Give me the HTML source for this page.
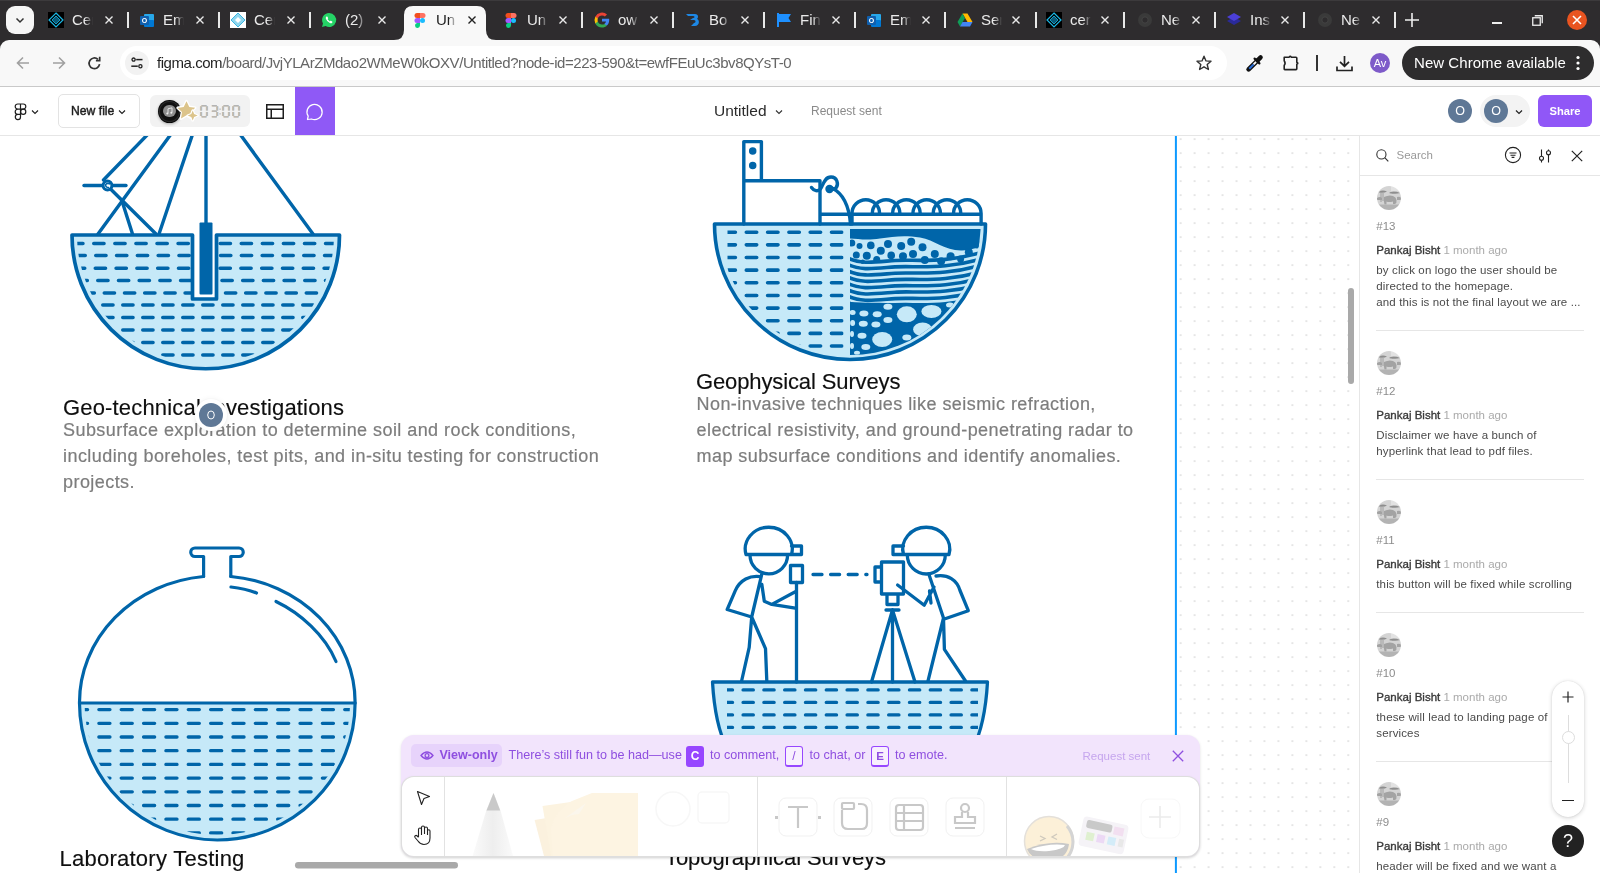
<!DOCTYPE html>
<html><head><meta charset="utf-8">
<style>
*{box-sizing:border-box;margin:0;padding:0}
html,body{width:1600px;height:873px;overflow:hidden;background:#fff;font-family:"Liberation Sans",sans-serif}
.a{position:absolute}
svg{position:absolute;overflow:visible}
#tabs{position:absolute;left:0;top:0;width:1600px;height:50px;background:#2e2c2e}
.tab{position:absolute;top:0;height:40px;width:90px}
.fav{position:absolute;left:0;top:12px;width:16px;height:16px}
.tt{position:absolute;left:24px;top:12px;font-size:15px;line-height:16px;color:#eaeaea;white-space:nowrap;width:21px;overflow:hidden;-webkit-mask-image:linear-gradient(90deg,#000 60%,transparent 100%)}
.tx{position:absolute;left:57px;top:16px;width:8px;height:8px}
.sep{position:absolute;top:12px;width:2px;height:16px;background:#e8e8e8}
#toolbar{position:absolute;left:0;top:40px;width:1600px;height:47px;background:#f8f8f8;border-bottom:1px solid #c9c9c9;border-radius:9px 9px 0 0}
#figbar{position:absolute;left:0;top:87px;width:1600px;height:49px;background:#fff;border-bottom:1px solid #e6e6e6}
#canvas{position:absolute;left:0;top:136px;width:1359px;height:737px;background:#fff;overflow:hidden}
#panel{position:absolute;left:1359px;top:136px;width:241px;height:737px;background:#fff;border-left:1px solid #e6e6e6;overflow:hidden}
.h{position:absolute;font-size:22px;line-height:26px;letter-spacing:0.17px;color:#0f0f0f;white-space:nowrap;-webkit-text-stroke:0.15px #0f0f0f}
.p{position:absolute;font-size:18px;color:#7d7d7d;line-height:26px;letter-spacing:0.44px;white-space:nowrap;-webkit-text-stroke:0.2px #7d7d7d}
</style></head><body>
<div style="position:absolute;left:0;top:0;width:1600px;height:873px;will-change:transform;overflow:hidden"><div id="tabs">
<div class="a" style="left:0;top:0;width:1600px;height:1px;background:#3c3a3c"></div>
<div class="a" style="left:6px;top:6px;width:28px;height:28px;border-radius:9px;background:#f6f6f6"></div>
<svg style="left:15px;top:15px" width="10" height="10" viewBox="0 0 10 10"><path d="M1.5 3.5L5 7L8.5 3.5" fill="none" stroke="#333" stroke-width="1.5"/></svg>
<svg style="left:394.0px;top:6px" width="104" height="34" viewBox="0 0 104 34"><path d="M0 34 Q10 34 10 24 V9 Q10 0 19 0 H83 Q92 0 92 9 V24 Q92 34 102 34 Z" fill="#f8f8f8"/></svg>
<div class="tab" style="left:48.0px"><svg class="fav" viewBox="0 0 16 16" width="16" height="16"><rect width="16" height="16" fill="#000"/><path d="M8 1L15 8L8 15L1 8Z" fill="none" stroke="#1ab8e6" stroke-width="1.2"/><path d="M8 4L12 8L8 12L4 8Z" fill="#0a5a78" stroke="#1ab8e6" stroke-width=".8"/></svg><div class="tt" style="color:#eaeaea">Cer</div><svg class="tx" style="left:57.0px" viewBox="0 0 8 8"><path d="M.5 .5L7.5 7.5M7.5 .5L.5 7.5" stroke="#eaeaea" stroke-width="1.4"/></svg></div>
<div class="sep" style="left:127.0px"></div>
<div class="tab" style="left:139.0px"><svg class="fav" viewBox="0 0 16 16" width="16" height="16"><rect x="5" y="2" width="10" height="12" rx="1" fill="#28a8ea"/><rect x="5" y="8" width="10" height="7" rx="1" fill="#0078d4"/><rect x="1" y="4" width="9" height="9" rx="1" fill="#0f5fae"/><text x="5.5" y="11.3" font-size="7" font-weight="bold" fill="#fff" text-anchor="middle" font-family="Liberation Sans">O</text></svg><div class="tt" style="color:#eaeaea">Em</div><svg class="tx" style="left:56.8px" viewBox="0 0 8 8"><path d="M.5 .5L7.5 7.5M7.5 .5L.5 7.5" stroke="#eaeaea" stroke-width="1.4"/></svg></div>
<div class="sep" style="left:217.9px"></div>
<div class="tab" style="left:230.0px"><svg class="fav" viewBox="0 0 16 16" width="16" height="16"><rect width="16" height="16" fill="#fff"/><path d="M8 1L15 8L8 15L1 8Z" fill="#8fd6ee" stroke="#3bb5e0" stroke-width="1"/><path d="M8 5L11 8L8 11L5 8Z" fill="#fff"/></svg><div class="tt" style="color:#eaeaea">Cer</div><svg class="tx" style="left:56.7px" viewBox="0 0 8 8"><path d="M.5 .5L7.5 7.5M7.5 .5L.5 7.5" stroke="#eaeaea" stroke-width="1.4"/></svg></div>
<div class="sep" style="left:308.7px"></div>
<div class="tab" style="left:321.0px"><svg class="fav" viewBox="0 0 16 16" width="16" height="16"><path d="M8 1a7 7 0 0 0-6 10.5L1 15l3.6-1A7 7 0 1 0 8 1z" fill="#25d366"/><path d="M5.5 4.6c.3-.2.7-.2.9.1l.7 1.3c.1.3 0 .5-.2.7l-.4.4c.5 1 1.3 1.8 2.3 2.3l.4-.4c.2-.2.5-.3.7-.2l1.3.7c.3.2.3.6.1.9-.6.9-1.5 1-2.4.6A7 7 0 0 1 5 7c-.4-.9-.2-1.8.5-2.4z" fill="#fff"/></svg><div class="tt" style="color:#eaeaea">(2)</div><svg class="tx" style="left:56.5px" viewBox="0 0 8 8"><path d="M.5 .5L7.5 7.5M7.5 .5L.5 7.5" stroke="#eaeaea" stroke-width="1.4"/></svg></div>
<div class="tab" style="left:412.0px"><svg class="fav" viewBox="0 0 16 16" width="16" height="16"><path d="M5 1h3v5H5a2.5 2.5 0 0 1 0-5z" fill="#f24e1e"/><path d="M8 1h3a2.5 2.5 0 0 1 0 5H8z" fill="#ff7262"/><path d="M5 6h3v5H5a2.5 2.5 0 0 1 0-5z" fill="#a259ff"/><circle cx="10.5" cy="8.5" r="2.5" fill="#1abcfe"/><path d="M5 11h3v2.5A2.5 2.5 0 1 1 5 11z" fill="#0acf83"/></svg><div class="tt" style="color:#222">Un</div><svg class="tx" style="left:56.3px" viewBox="0 0 8 8"><path d="M.5 .5L7.5 7.5M7.5 .5L.5 7.5" stroke="#222" stroke-width="1.4"/></svg></div>
<div class="tab" style="left:503.0px"><svg class="fav" viewBox="0 0 16 16" width="16" height="16"><path d="M5 1h3v5H5a2.5 2.5 0 0 1 0-5z" fill="#f24e1e"/><path d="M8 1h3a2.5 2.5 0 0 1 0 5H8z" fill="#ff7262"/><path d="M5 6h3v5H5a2.5 2.5 0 0 1 0-5z" fill="#a259ff"/><circle cx="10.5" cy="8.5" r="2.5" fill="#1abcfe"/><path d="M5 11h3v2.5A2.5 2.5 0 1 1 5 11z" fill="#0acf83"/></svg><div class="tt" style="color:#eaeaea">Un</div><svg class="tx" style="left:56.2px" viewBox="0 0 8 8"><path d="M.5 .5L7.5 7.5M7.5 .5L.5 7.5" stroke="#eaeaea" stroke-width="1.4"/></svg></div>
<div class="sep" style="left:581.3px"></div>
<div class="tab" style="left:594.0px"><svg class="fav" viewBox="0 0 16 16" width="16" height="16"><path d="M15.2 8.2c0-.5 0-1-.1-1.4H8v2.7h4a3.5 3.5 0 0 1-1.5 2.2v1.8h2.4c1.4-1.3 2.3-3.2 2.3-5.3z" fill="#4285f4"/><path d="M8 15.5c2 0 3.7-.7 4.9-1.8l-2.4-1.8c-.7.4-1.5.7-2.5.7-1.9 0-3.6-1.3-4.2-3.1H1.3v1.9A7.5 7.5 0 0 0 8 15.5z" fill="#34a853"/><path d="M3.8 9.5a4.5 4.5 0 0 1 0-2.9V4.7H1.3a7.5 7.5 0 0 0 0 6.7z" fill="#fbbc05"/><path d="M8 3.5c1.1 0 2.1.4 2.9 1.1l2.1-2.1A7.5 7.5 0 0 0 1.3 4.7l2.5 1.9C4.4 4.8 6.1 3.5 8 3.5z" fill="#ea4335"/></svg><div class="tt" style="color:#eaeaea">ow</div><svg class="tx" style="left:56.0px" viewBox="0 0 8 8"><path d="M.5 .5L7.5 7.5M7.5 .5L.5 7.5" stroke="#eaeaea" stroke-width="1.4"/></svg></div>
<div class="sep" style="left:672.1px"></div>
<div class="tab" style="left:685.0px"><svg class="fav" viewBox="0 0 16 16" width="16" height="16"><path d="M1 2h9c3 0 4 3 2 5 3 1 2.5 7-2 7H6l3-3c2 0 2-3 0-3H5l3-2c2 0 2-2 0-2H3z" fill="#1e88e5"/></svg><div class="tt" style="color:#eaeaea">Bo</div><svg class="tx" style="left:55.9px" viewBox="0 0 8 8"><path d="M.5 .5L7.5 7.5M7.5 .5L.5 7.5" stroke="#eaeaea" stroke-width="1.4"/></svg></div>
<div class="sep" style="left:763.0px"></div>
<div class="tab" style="left:776.0px"><svg class="fav" viewBox="0 0 16 16" width="16" height="16"><rect x="1" y="1" width="2" height="14" fill="#1e90ff"/><path d="M3 2h12l-2.5 4L15 10H3z" fill="#1e90ff"/></svg><div class="tt" style="color:#eaeaea">Fin</div><svg class="tx" style="left:55.7px" viewBox="0 0 8 8"><path d="M.5 .5L7.5 7.5M7.5 .5L.5 7.5" stroke="#eaeaea" stroke-width="1.4"/></svg></div>
<div class="sep" style="left:853.9px"></div>
<div class="tab" style="left:866.0px"><svg class="fav" viewBox="0 0 16 16" width="16" height="16"><rect x="5" y="2" width="10" height="12" rx="1" fill="#28a8ea"/><rect x="5" y="8" width="10" height="7" rx="1" fill="#0078d4"/><rect x="1" y="4" width="9" height="9" rx="1" fill="#0f5fae"/><text x="5.5" y="11.3" font-size="7" font-weight="bold" fill="#fff" text-anchor="middle" font-family="Liberation Sans">O</text></svg><div class="tt" style="color:#eaeaea">Em</div><svg class="tx" style="left:55.5px" viewBox="0 0 8 8"><path d="M.5 .5L7.5 7.5M7.5 .5L.5 7.5" stroke="#eaeaea" stroke-width="1.4"/></svg></div>
<div class="sep" style="left:943.7px"></div>
<div class="tab" style="left:957.0px"><svg class="fav" viewBox="0 0 16 16" width="16" height="16"><path d="M5.5 1.5h5l5 8.5h-5z" fill="#ffba00"/><path d="M5.5 1.5L0.5 10l2.5 4.5 5-8.5z" fill="#0f9d58"/><path d="M3 14.5h10l2.5-4.5h-10z" fill="#4285f4"/></svg><div class="tt" style="color:#eaeaea">Ser</div><svg class="tx" style="left:55.4px" viewBox="0 0 8 8"><path d="M.5 .5L7.5 7.5M7.5 .5L.5 7.5" stroke="#eaeaea" stroke-width="1.4"/></svg></div>
<div class="sep" style="left:1034.6px"></div>
<div class="tab" style="left:1046.0px"><svg class="fav" viewBox="0 0 16 16" width="16" height="16"><rect width="16" height="16" fill="#000"/><path d="M8 1L15 8L8 15L1 8Z" fill="none" stroke="#1ab8e6" stroke-width="1.2"/><path d="M8 4L12 8L8 12L4 8Z" fill="#0a5a78" stroke="#1ab8e6" stroke-width=".8"/></svg><div class="tt" style="color:#eaeaea">cer</div><svg class="tx" style="left:55.2px" viewBox="0 0 8 8"><path d="M.5 .5L7.5 7.5M7.5 .5L.5 7.5" stroke="#eaeaea" stroke-width="1.4"/></svg></div>
<div class="sep" style="left:1123.4px"></div>
<div class="tab" style="left:1137.0px"><svg class="fav" viewBox="0 0 16 16" width="16" height="16"><circle cx="8" cy="8" r="7" fill="#3a3a3a"/><circle cx="8" cy="8" r="3.2" fill="#2e2c2e" stroke="#444" stroke-width="1"/></svg><div class="tt" style="color:#eaeaea">Ne</div><svg class="tx" style="left:55.0px" viewBox="0 0 8 8"><path d="M.5 .5L7.5 7.5M7.5 .5L.5 7.5" stroke="#eaeaea" stroke-width="1.4"/></svg></div>
<div class="sep" style="left:1214.3px"></div>
<div class="tab" style="left:1226.0px"><svg class="fav" viewBox="0 0 16 16" width="16" height="16"><path d="M8 5l7 4-7 4-7-4z" fill="#2a2a9a"/><path d="M8 1l7 4-7 4-7-4z" fill="#4b3fd8"/></svg><div class="tt" style="color:#eaeaea">Ins</div><svg class="tx" style="left:54.9px" viewBox="0 0 8 8"><path d="M.5 .5L7.5 7.5M7.5 .5L.5 7.5" stroke="#eaeaea" stroke-width="1.4"/></svg></div>
<div class="sep" style="left:1303.1px"></div>
<div class="tab" style="left:1317.0px"><svg class="fav" viewBox="0 0 16 16" width="16" height="16"><circle cx="8" cy="8" r="7" fill="#3a3a3a"/><circle cx="8" cy="8" r="3.2" fill="#2e2c2e" stroke="#444" stroke-width="1"/></svg><div class="tt" style="color:#eaeaea">Ne</div><svg class="tx" style="left:54.7px" viewBox="0 0 8 8"><path d="M.5 .5L7.5 7.5M7.5 .5L.5 7.5" stroke="#eaeaea" stroke-width="1.4"/></svg></div>
<div class="sep" style="left:1394.0px"></div>
<svg style="left:1405px;top:13px" width="14" height="14" viewBox="0 0 14 14"><path d="M7 0V14M0 7H14" stroke="#eee" stroke-width="1.6"/></svg>
<div class="a" style="left:1492px;top:22px;width:10px;height:1.5px;background:#eee"></div>
<svg style="left:1532px;top:15px" width="11" height="11" viewBox="0 0 11 11"><rect x=".75" y="2.75" width="7.5" height="7.5" fill="none" stroke="#eee" stroke-width="1.3"/><path d="M2.75 .75H10.25V8.25" fill="none" stroke="#eee" stroke-width="1.3"/></svg>
<div class="a" style="left:1567px;top:10px;width:20px;height:20px;border-radius:50%;background:#e95420"></div>
<svg style="left:1572px;top:15px" width="10" height="10" viewBox="0 0 10 10"><path d="M1 1L9 9M9 1L1 9" stroke="#fff" stroke-width="1.6"/></svg>
</div>
<div id="toolbar">
<svg style="left:16px;top:16px" width="14" height="14" viewBox="0 0 14 14"><path d="M13 7H1.5M7 1.5L1.5 7L7 12.5" fill="none" stroke="#a0a0a0" stroke-width="1.6"/></svg>
<svg style="left:52px;top:16px" width="14" height="14" viewBox="0 0 14 14"><path d="M1 7H12.5M7 1.5L12.5 7L7 12.5" fill="none" stroke="#a0a0a0" stroke-width="1.6"/></svg>
<svg style="left:87px;top:15.5px" width="15" height="15" viewBox="0 0 15 15"><path d="M12.6 8.2A5.3 5.3 0 1 1 11 3.4" fill="none" stroke="#333" stroke-width="1.7"/><path d="M12.7 0.8V4.6H8.9" fill="none" stroke="#333" stroke-width="1.7"/></svg>
<div class="a" style="left:120px;top:6px;width:1107px;height:34px;border-radius:17px;background:#fff"></div>
<div class="a" style="left:125px;top:11px;width:24px;height:24px;border-radius:50%;background:#f2f2f2"></div>
<svg style="left:131px;top:17px" width="12" height="12" viewBox="0 0 12 12"><circle cx="2.6" cy="2.6" r="1.6" fill="none" stroke="#222" stroke-width="1.3"/><path d="M5.2 2.6H11.5" stroke="#222" stroke-width="1.5"/><circle cx="9.4" cy="9.2" r="1.6" fill="none" stroke="#222" stroke-width="1.3"/><path d="M0.3 9.2H6.8" stroke="#222" stroke-width="1.5"/></svg>
<div class="a" style="left:157px;top:13px;font-size:15px;line-height:20px;white-space:nowrap;color:#666;letter-spacing:-0.45px"><span style="color:#1f1f1f">figma.com</span>/board/JvjYLArZMdao2WMeW0kOXV/Untitled?node-id=223-590&amp;t=ewfFEuUc3bv8QYsT-0</div>
<svg style="left:1196px;top:15px" width="16" height="16" viewBox="0 0 16 16"><path d="M8 1.2L10 5.9L15 6.2L11.2 9.5L12.4 14.5L8 11.8L3.6 14.5L4.8 9.5L1 6.2L6 5.9Z" fill="none" stroke="#333" stroke-width="1.4" stroke-linejoin="round"/></svg>
<svg style="left:1246px;top:14px" width="18" height="18" viewBox="0 0 18 18"><path d="M2.6 15.4L11.2 6.8" stroke="#111" stroke-width="4.6" stroke-linecap="round"/><path d="M3.3 14.7L7.6 10.4" stroke="#2a6fdc" stroke-width="2"/><path d="M7.6 10.4L10.6 7.4" stroke="#f8f8f8" stroke-width="2"/><path d="M8.6 4.6L13.4 9.4" stroke="#111" stroke-width="2.2" stroke-linecap="round"/><path d="M11.6 6.4L14.6 3.4" stroke="#111" stroke-width="4.4" stroke-linecap="round"/></svg><svg style="left:1282px;top:54px;top:14px" width="18" height="18" viewBox="0 0 18 18"><path d="M2.2 3.2H7.2Q8.2 1.2 9.2 3.2H14Q14.8 3.2 14.8 4V8.2Q16.8 9.2 14.8 10.2V14.8Q14.8 15.6 14 15.6H2.8Q2.2 15.6 2.2 15V11.6Q4 9.2 2.2 6.8V3.8Q2.2 3.2 2.8 3.2Z" fill="none" stroke="#222" stroke-width="1.6" stroke-linejoin="round"/></svg>
<div class="a" style="left:1316px;top:15px;width:2px;height:16px;background:#333"></div>
<svg style="left:1336px;top:15px" width="17" height="17" viewBox="0 0 17 17"><path d="M8.5 1V11M4 6.8L8.5 11.2L13 6.8" fill="none" stroke="#222" stroke-width="1.7"/><path d="M1 11.5V15.5H16V11.5" fill="none" stroke="#222" stroke-width="1.7"/></svg>
<div class="a" style="left:1370px;top:13px;width:20px;height:20px;border-radius:50%;background:#7e5bc9;color:#fff;font-size:11px;line-height:20px;text-align:center">Av</div>
<div class="a" style="left:1402px;top:6px;width:192px;height:34px;border-radius:17px;background:#2e2d2e"></div>
<div class="a" style="left:1414px;top:13px;font-size:15px;line-height:20px;color:#fff;white-space:nowrap;letter-spacing:0.05px">New Chrome available</div>
<svg style="left:1575px;top:15px" width="6" height="16" viewBox="0 0 6 16"><circle cx="3" cy="2.5" r="1.6" fill="#fff"/><circle cx="3" cy="8" r="1.6" fill="#fff"/><circle cx="3" cy="13.5" r="1.6" fill="#fff"/></svg>
</div>
<div id="figbar">
<svg style="left:14px;top:16px" width="13" height="17" viewBox="0 0 13 17"><g fill="none" stroke="#1e1e1e" stroke-width="1.2"><path d="M6.5 1H3.8a2.6 2.6 0 0 0 0 5.2H6.5zM6.5 1H9.2a2.6 2.6 0 0 1 0 5.2H6.5zM6.5 6.2H3.8a2.6 2.6 0 0 0 0 5.2H6.5zM6.5 11.4H3.8a2.6 2.6 0 1 0 2.7 2.6z"/><circle cx="9.2" cy="8.8" r="2.6"/></g></svg>
<svg style="left:31px;top:22px" width="8" height="6" viewBox="0 0 8 6"><path d="M1 1.5L4 4.5L7 1.5" fill="none" stroke="#1e1e1e" stroke-width="1.1"/></svg>
<div class="a" style="left:58px;top:7px;width:82px;height:34px;border:1px solid #e3e3e3;border-radius:5px"></div>
<div class="a" style="left:71px;top:17px;font-size:12.2px;line-height:14px;color:#1e1e1e;white-space:nowrap;-webkit-text-stroke:0.45px #1e1e1e">New file</div>
<svg style="left:118px;top:22px" width="8" height="6" viewBox="0 0 8 6"><path d="M1 1.5L4 4.5L7 1.5" fill="none" stroke="#1e1e1e" stroke-width="1.1"/></svg>
<div class="a" style="left:150px;top:8px;width:100px;height:32px;border-radius:6px;background:#f2f2f2"></div>
<div class="a" style="left:158px;top:12.5px;width:22.5px;height:23px;border-radius:50%;background:radial-gradient(circle,#111 55%,#2a2a2a 62%,#000 70%);box-shadow:0 1px 3px rgba(0,0,0,.3)"></div><div class="a" style="left:163.3px;top:17.6px;width:12.8px;height:12.8px;border-radius:50%;background:#8e8e8e"></div><svg style="left:166px;top:20px" width="7" height="8" viewBox="0 0 7 8"><path d="M2 6.5V1.8L6 0.8V5.5" fill="none" stroke="#eee" stroke-width=".9"/><circle cx="1.3" cy="6.5" r="1" fill="#eee"/><circle cx="5.3" cy="5.7" r="1" fill="#eee"/></svg><svg style="left:174px;top:12px" width="28" height="26" viewBox="0 0 28 26"><g fill="#dcc48b" stroke="#fff" stroke-width="2.6" stroke-linejoin="round" paint-order="stroke"><path d="M12.5 2.2L15.3 7.9L21.2 8.8L16.9 13L17.9 19.3L12.5 16.3L7 19.6L8 13.1L3.6 8.9L9.7 7.9Z"/><path d="M18.7 11.5L20.1 15.1L23.7 16.5L20.1 17.9L18.7 21.5L17.3 17.9L13.7 16.5L17.3 15.1Z" stroke-width="2.4"/></g></svg><svg style="left:0;top:0" width="260" height="48" viewBox="0 0 260 48"><path d="M201.70 18.65H206.30M206.95 19.30V23.40M206.95 25.00V29.10M201.70 29.75H206.30M201.05 25.00V29.10M201.05 19.30V23.40M212.00 18.65H216.60M217.25 19.30V23.40M217.25 25.00V29.10M212.00 29.75H216.60M212.00 24.20H216.60M223.70 18.65H228.30M228.95 19.30V23.40M228.95 25.00V29.10M223.70 29.75H228.30M223.05 25.00V29.10M223.05 19.30V23.40M233.80 18.65H238.40M239.05 19.30V23.40M239.05 25.00V29.10M233.80 29.75H238.40M233.15 25.00V29.10M233.15 19.30V23.40" fill="none" stroke="#a9c3dd" stroke-width="1.5" transform="translate(0.4 0)"/><path d="M201.70 18.65H206.30M206.95 19.30V23.40M206.95 25.00V29.10M201.70 29.75H206.30M201.05 25.00V29.10M201.05 19.30V23.40M212.00 18.65H216.60M217.25 19.30V23.40M217.25 25.00V29.10M212.00 29.75H216.60M212.00 24.20H216.60M223.70 18.65H228.30M228.95 19.30V23.40M228.95 25.00V29.10M223.70 29.75H228.30M223.05 25.00V29.10M223.05 19.30V23.40M233.80 18.65H238.40M239.05 19.30V23.40M239.05 25.00V29.10M233.80 29.75H238.40M233.15 25.00V29.10M233.15 19.30V23.40" fill="none" stroke="#dcc7a8" stroke-width="1.5" transform="translate(-0.4 0)"/><path d="M201.70 18.65H206.30M206.95 19.30V23.40M206.95 25.00V29.10M201.70 29.75H206.30M201.05 25.00V29.10M201.05 19.30V23.40M212.00 18.65H216.60M217.25 19.30V23.40M217.25 25.00V29.10M212.00 29.75H216.60M212.00 24.20H216.60M223.70 18.65H228.30M228.95 19.30V23.40M228.95 25.00V29.10M223.70 29.75H228.30M223.05 25.00V29.10M223.05 19.30V23.40M233.80 18.65H238.40M239.05 19.30V23.40M239.05 25.00V29.10M233.80 29.75H238.40M233.15 25.00V29.10M233.15 19.30V23.40" fill="none" stroke="#b4b4b4" stroke-width="1.2"/><rect x="219.4" y="21.5" width="1.3" height="1.3" fill="#b4b4b4"/><rect x="219.4" y="26.2" width="1.3" height="1.3" fill="#b4b4b4"/></svg>
<svg style="left:265px;top:16px" width="20" height="17" viewBox="0 0 20 17"><path d="M1.75 1.75H18.25V15.25H1.75ZM1.75 6.25H18.25M6.25 6.25V15.25" fill="none" stroke="#1e1e1e" stroke-width="1.5"/></svg>
<div class="a" style="left:295px;top:0px;width:40px;height:48px;background:#8f59f6"></div>
<svg style="left:305px;top:15px" width="20" height="19" viewBox="0 0 20 19"><path d="M3.2 14.2A7.6 7.6 0 1 1 6.5 17L2.5 17.5Z" fill="none" stroke="#fff" stroke-width="1.25" stroke-linejoin="round"/></svg>
<div class="a" style="left:714px;top:15.2px;font-size:15.5px;line-height:18px;color:#2a2a2a;white-space:nowrap">Untitled</div>
<svg style="left:775px;top:22px" width="8" height="6" viewBox="0 0 8 6"><path d="M1 1.5L4 4.5L7 1.5" fill="none" stroke="#333" stroke-width="1.1"/></svg>
<div class="a" style="left:811px;top:17.2px;font-size:12px;line-height:14px;color:#8a8a8a;white-space:nowrap">Request sent</div>
<div class="a" style="left:1448px;top:12px;width:24px;height:24px;border-radius:50%;background:#5f7896;color:#fff;font-size:12.5px;line-height:24px;text-align:center">O</div>
<div class="a" style="left:1479.7px;top:8px;width:50px;height:32px;border-radius:16px;background:#f3f3f3"></div>
<div class="a" style="left:1484px;top:12px;width:24px;height:24px;border-radius:50%;background:#5f7896;color:#fff;font-size:12.5px;line-height:24px;text-align:center">O</div>
<svg style="left:1514.5px;top:22px" width="8" height="6" viewBox="0 0 8 6"><path d="M1 1.5L4 4.5L7 1.5" fill="none" stroke="#222" stroke-width="1.2"/></svg>
<div class="a" style="left:1538px;top:8px;width:54px;height:32px;border-radius:6px;background:#9057f7;color:#fff;font-size:11.2px;line-height:32px;text-align:center;font-weight:bold">Share</div>
</div>
<div id="canvas"><div class="a" style="left:0;top:-136px;width:1359px;height:873px"><svg style="left:0;top:0" width="1359" height="873" viewBox="0 0 1359 873">
<defs>
<clipPath id="c1"><path d="M77 235A128.5 128.5 0 0 0 334 235Z"/></clipPath>
<clipPath id="c2l"><path d="M719.5 224A130.5 130.5 0 0 0 980.5 224Z"/></clipPath>
<clipPath id="c3"><path d="M84.5 703A132.8 132 0 0 0 350.1 703Z"/></clipPath>
<pattern id="dots" width="1" height="1"></pattern>
</defs>
<g fill="none" stroke="#0065a9" stroke-width="3.4" stroke-linecap="round" stroke-linejoin="round">
<path d="M72 235A133.5 133.5 0 0 0 339 235Z" fill="#c6e9f8" stroke="none"/>
<g clip-path="url(#c1)" stroke-linecap="round">
<path d="M51.61 243.50H366.07" stroke-dasharray="10.30 10.77" stroke-width="3.5" stroke-linecap="round"/>
<path d="M54.15 255.50H365.80" stroke-dasharray="10.30 10.50" stroke-width="3.5" stroke-linecap="round"/>
<path d="M53.65 268.20H365.80" stroke-dasharray="10.30 10.50" stroke-width="3.5" stroke-linecap="round"/>
<path d="M56.35 280.60H365.70" stroke-dasharray="10.30 10.40" stroke-width="3.5" stroke-linecap="round"/>
<path d="M63.85 292.90H365.20" stroke-dasharray="10.30 9.90" stroke-width="3.5" stroke-linecap="round"/>
<path d="M62.75 305.00H365.00" stroke-dasharray="10.30 9.70" stroke-width="3.5" stroke-linecap="round"/>
<path d="M62.75 317.50H365.00" stroke-dasharray="10.30 9.70" stroke-width="3.5" stroke-linecap="round"/>
<path d="M62.75 330.00H365.00" stroke-dasharray="10.30 9.70" stroke-width="3.5" stroke-linecap="round"/>
<path d="M62.75 342.50H365.00" stroke-dasharray="10.30 9.70" stroke-width="3.5" stroke-linecap="round"/>
<path d="M62.75 355.00H365.00" stroke-dasharray="10.30 9.70" stroke-width="3.5" stroke-linecap="round"/>
</g>
<rect x="193" y="233" width="23.5" height="66" fill="#fff" stroke="none"/>
<path d="M339.5 235A133.5 133.5 0 0 1 72 235H192.5V299H216.5V235Z" stroke-width="3.7"/>
<rect x="199.5" y="222.5" width="13" height="72" rx="1" fill="#0065a9" stroke="none"/>
<path d="M206 130V222.5"/>
<path d="M152 130L103.5 180"/>
<path d="M174 130L98 234"/>
<path d="M194 130L159 234"/>
<path d="M237 130L313 234"/>
<path d="M107 185.5L156 234"/>
<path d="M122 201L132.5 234"/>
<path d="M84 185.5H126"/>
<circle cx="107.5" cy="185.5" r="4.4" fill="#fff" stroke-width="3"/><path d="M109.5 183.8Q107 182.5 105.6 184.6Q105.5 187.5 108.5 187.6" stroke-width="1.6"/>
</g>
<g fill="none" stroke="#0065a9" stroke-width="3.4" stroke-linecap="round" stroke-linejoin="round">
<path d="M714.5 224A135.5 135.5 0 0 0 985.5 224Z" fill="#c6e9f8" stroke="none"/>
<g clip-path="url(#c2l)"><g clip-path="url(#lefthalf2)">
</g></g>
<clipPath id="c2lr"><rect x="727.5" y="226" width="116" height="140"/></clipPath>
<g clip-path="url(#c2l)"><g clip-path="url(#c2lr)">
<path d="M703.70 232.20H866.30" stroke-dasharray="10.40 10.90" stroke-width="3.6" stroke-linecap="round"/>
<path d="M703.70 244.85H866.30" stroke-dasharray="10.40 10.90" stroke-width="3.6" stroke-linecap="round"/>
<path d="M703.70 257.50H866.30" stroke-dasharray="10.40 10.90" stroke-width="3.6" stroke-linecap="round"/>
<path d="M703.70 270.15H866.30" stroke-dasharray="10.40 10.90" stroke-width="3.6" stroke-linecap="round"/>
<path d="M703.70 282.80H866.30" stroke-dasharray="10.40 10.90" stroke-width="3.6" stroke-linecap="round"/>
<path d="M703.70 295.45H866.30" stroke-dasharray="10.40 10.90" stroke-width="3.6" stroke-linecap="round"/>
<path d="M703.70 308.10H866.30" stroke-dasharray="10.40 10.90" stroke-width="3.6" stroke-linecap="round"/>
<path d="M703.70 320.75H866.30" stroke-dasharray="10.40 10.90" stroke-width="3.6" stroke-linecap="round"/>
<path d="M703.70 333.40H866.30" stroke-dasharray="10.40 10.90" stroke-width="3.6" stroke-linecap="round"/>
<path d="M703.70 346.05H866.30" stroke-dasharray="10.40 10.90" stroke-width="3.6" stroke-linecap="round"/>
</g></g>
<clipPath id="c2r"><path d="M850 229H980.5V230A130.5 130.5 0 0 1 850 355Z"/></clipPath>
<g clip-path="url(#c2r)" stroke="none" fill="#0065a9">
<path d="M850 228H990V243C984 243 978 250 962 250.5C945 251 935 240 920 237.5C905 235 893 236.5 880 238.5C868 240.5 858 239 850 238.5Z"/>
<circle cx="851.8" cy="243.1" r="3.5"/>
<circle cx="859.5" cy="245.9" r="3"/>
<circle cx="870.8" cy="245.4" r="3.8"/>
<circle cx="888" cy="244" r="4"/>
<circle cx="901.2" cy="245.9" r="4"/>
<circle cx="911.2" cy="241.8" r="4"/>
<circle cx="922.5" cy="247.2" r="4"/>
<circle cx="880.8" cy="250.8" r="4"/>
<circle cx="856.3" cy="254.9" r="3.5"/>
<circle cx="866.8" cy="255.8" r="4"/>
<circle cx="876.7" cy="259.5" r="3.5"/>
<circle cx="891.2" cy="255.4" r="3.8"/>
<circle cx="903" cy="256.3" r="4"/>
<circle cx="913" cy="254" r="4"/>
<circle cx="924.8" cy="259.9" r="4"/>
<circle cx="934.8" cy="254" r="4"/>
<circle cx="941.1" cy="261.3" r="4"/>
<circle cx="950.6" cy="256.3" r="4"/>
<circle cx="960.6" cy="259" r="3.5"/>
<circle cx="968.8" cy="252.2" r="4"/>
<circle cx="976.9" cy="245.9" r="2.5"/>
<circle cx="862.7" cy="261.7" r="2.2"/>
<circle cx="986" cy="250" r="3"/>
<path d="M850 302C865 303 880 302.5 900 303.5S950 306 990 296V370H850Z"/>
</g>
<g clip-path="url(#c2r)" stroke="#0065a9" stroke-width="3.6" fill="none" stroke-linecap="butt">
<path d="M848 258.0C860 264.5 875 262.0 895 260.5S945 264.5 988 250.5"/>
<path d="M848 264.4C860 270.9 875 268.4 895 266.9S945 270.9 988 256.9"/>
<path d="M848 270.7C860 277.2 875 274.7 895 273.2S945 277.2 988 263.2"/>
<path d="M848 277.1C860 283.6 875 281.1 895 279.6S945 283.6 988 269.6"/>
<path d="M848 283.4C860 289.9 875 287.4 895 285.9S945 289.9 988 275.9"/>
<path d="M848 289.8C860 296.2 875 293.8 895 292.2S945 296.2 988 282.2"/>
<path d="M848 296.1C860 302.6 875 300.1 895 298.6S945 302.6 988 288.6"/>
<path d="M848 302.4C860 308.9 875 306.4 895 304.9S945 308.9 988 294.9"/>
</g>
<g clip-path="url(#c2r)" stroke="none" fill="#c6e9f8">
<ellipse cx="852.6" cy="312.4" rx="3" ry="2.5"/>
<ellipse cx="863.9" cy="313.6" rx="4.5" ry="3"/>
<ellipse cx="877.2" cy="314.3" rx="4.5" ry="3"/>
<ellipse cx="887.9" cy="306.7" rx="4.5" ry="3"/>
<ellipse cx="887.9" cy="320" rx="4.5" ry="3"/>
<ellipse cx="863.3" cy="323.7" rx="4.5" ry="3"/>
<ellipse cx="875.9" cy="324.4" rx="4.5" ry="3"/>
<ellipse cx="852.6" cy="323" rx="2.5" ry="3"/>
<ellipse cx="862" cy="335.7" rx="4.5" ry="3"/>
<ellipse cx="852" cy="334" rx="2" ry="3"/>
<ellipse cx="882.2" cy="339.5" rx="10" ry="7.5"/>
<ellipse cx="865.8" cy="347" rx="4.5" ry="3"/>
<ellipse cx="852" cy="346" rx="2" ry="3"/>
<ellipse cx="906.8" cy="314.3" rx="10" ry="8"/>
<ellipse cx="931.4" cy="311.4" rx="10" ry="6.5"/>
<ellipse cx="922.6" cy="329.4" rx="9.5" ry="7"/>
<ellipse cx="906.8" cy="337.6" rx="4.5" ry="3"/>
<ellipse cx="857" cy="352.7" rx="3" ry="2"/>
<ellipse cx="950" cy="305" rx="4" ry="2.5"/>
</g>
<path d="M985.5 224A135.5 135.5 0 0 1 714.5 224Z" stroke-width="3.6"/>
<path d="M850 224V360"  stroke-width="0"/>
<path d="M743.8 224V141.6H761.4V180.8M743.8 180.8H820V224M820 214.3H850"/>
<circle cx="752.7" cy="151" r="3" fill="#0065a9" stroke-width="1.5"/><circle cx="752.7" cy="165.4" r="3" fill="#0065a9" stroke-width="1.5"/>
<path d="M811.5 187.5C814 191 818 192 820.5 189C823 186 824 177 831 177C837 177 839 184 836 188C833 190 829 189.5 829.5 188"/>
<circle cx="829.5" cy="189" r="2.5" fill="#0065a9"/>
<path d="M832 188C842 193 849 205 850.5 224"/>
<path d="M852.0 224V213.5A13.8 13.8 0 0 1 879.6 213.5V214"/>
<path d="M872.3 214V213.5A13.8 13.8 0 0 1 899.9 213.5V214"/>
<path d="M892.6 214V213.5A13.8 13.8 0 0 1 920.2 213.5V214"/>
<path d="M912.9 214V213.5A13.8 13.8 0 0 1 940.5 213.5V214"/>
<path d="M933.2 214V213.5A13.8 13.8 0 0 1 960.8 213.5V214"/>
<path d="M953.5 214V213.5A13.8 13.8 0 0 1 981.1 213.5V224"/>
<path d="M850 214.3H980"/>
</g>
<g fill="none" stroke="#0065a9" stroke-width="3.2" stroke-linecap="round" stroke-linejoin="round">
<path d="M79.5 703A137.8 137 0 0 0 355.1 703Z" fill="#c6e9f8" stroke="none"/>
<g clip-path="url(#c3)">
<path d="M76.50 709.60H382.35" stroke-dasharray="11.10 11.25" stroke-width="3.3" stroke-linecap="round"/>
<path d="M76.50 723.30H382.35" stroke-dasharray="11.10 11.25" stroke-width="3.3" stroke-linecap="round"/>
<path d="M76.50 737.00H382.35" stroke-dasharray="11.10 11.25" stroke-width="3.3" stroke-linecap="round"/>
<path d="M76.50 750.70H382.35" stroke-dasharray="11.10 11.25" stroke-width="3.3" stroke-linecap="round"/>
<path d="M76.50 764.40H382.35" stroke-dasharray="11.10 11.25" stroke-width="3.3" stroke-linecap="round"/>
<path d="M76.50 778.10H382.35" stroke-dasharray="11.10 11.25" stroke-width="3.3" stroke-linecap="round"/>
<path d="M76.50 791.80H382.35" stroke-dasharray="11.10 11.25" stroke-width="3.3" stroke-linecap="round"/>
<path d="M76.50 805.50H382.35" stroke-dasharray="11.10 11.25" stroke-width="3.3" stroke-linecap="round"/>
<path d="M76.50 819.20H382.35" stroke-dasharray="11.10 11.25" stroke-width="3.3" stroke-linecap="round"/>
<path d="M76.50 832.90H382.35" stroke-dasharray="11.10 11.25" stroke-width="3.3" stroke-linecap="round"/>
</g>
<path d="M203.6 576.5V556.5H195A4.2 4.2 0 0 1 195 548H239A4.2 4.2 0 0 1 239 556.5H230.8V576.5"/>
<path d="M203.6 576.5A137.8 126.5 0 0 0 79.5 703A137.8 137 0 0 0 355.1 703A137.8 126.5 0 0 0 230.8 576.5"/>
<path d="M79.5 703H355.1"/>
<path d="M231 587C240 588 249 590 256.5 593"/>
<path d="M276 601.5C300 613 325 635 336 661.5"/>
</g>
<g fill="none" stroke="#0065a9" stroke-width="3.3" stroke-linecap="round" stroke-linejoin="round">
<path d="M712.5 682H987.5Q985 725 973 748H727Q715 725 712.5 682Z" fill="#c6e9f8" stroke="none"/>
<clipPath id="c4"><path d="M727 684H978V748H727Z"/></clipPath>
<g clip-path="url(#c4)">
<path d="M701.50 689.90H1010.80" stroke-dasharray="10.20 10.60" stroke-width="3.4" stroke-linecap="round"/>
<path d="M701.50 702.40H1010.80" stroke-dasharray="10.20 10.60" stroke-width="3.4" stroke-linecap="round"/>
<path d="M701.50 714.90H1010.80" stroke-dasharray="10.20 10.60" stroke-width="3.4" stroke-linecap="round"/>
<path d="M701.50 727.40H1010.80" stroke-dasharray="10.20 10.60" stroke-width="3.4" stroke-linecap="round"/>
<path d="M701.50 739.90H1010.80" stroke-dasharray="10.20 10.60" stroke-width="3.4" stroke-linecap="round"/>
</g>
<path d="M712.5 682H987.5M712.5 682Q715 725 727 748M987.5 682Q985 725 973 748" stroke-width="3.3"/>
<path d="M746 554.5A23.5 21.8 0 1 1 791.5 554.5ZM791.5 546H801.5V554.5H791.5"/>
<path d="M750 555A18.8 18.8 0 1 0 787.6 555"/>
<path d="M790.5 565.5H802.5V582.5H790.5Z"/>
<path d="M796.5 582.5V682"/>
<path d="M761.8 574.2L751.7 617M751.7 617L749.2 647.3L741.6 681M751.7 617L765.5 648.6L766.8 681M760.5 576.7C750 575 740 580 735.3 590.6L727.2 609.5L751.7 617M761.8 584.3L764.3 601.2L771.8 604.4L795.3 591.8M771.8 604.4L795.3 608.2"/>
<path d="M813 574.5H867" stroke-dasharray="9 8.6"/>
<path d="M903.5 554.5A23.5 21.8 0 1 1 949 554.5ZM903.5 546H893V554.5H903.5"/>
<path d="M907.3 555A19 19 0 1 0 945.3 555"/>
<path d="M881.5 562H903.5V594H881.5ZM875 567H881.5V582H875ZM887 594H898V604.5H887ZM886 610H899"/>
<path d="M892.5 610L871.5 682M892.5 610V682M892.5 610L915 682"/>
<path d="M928.8 574L943.5 618M943.5 618L928 681M943.5 618L944.4 649.3L965.5 681M936 576C948 574 957 580 960 590.5L968.3 610.7L944.4 619M897.6 585L924.2 605.2L934 587M929.5 591L931 603"/>
</g>
<defs><pattern id="grid" x="1173.65" y="146.06" width="13.97" height="14" patternUnits="userSpaceOnUse"><circle cx="7" cy="7" r="0.85" fill="#cecece"/></pattern></defs>
<rect x="1177" y="136" width="182" height="737" fill="url(#grid)"/>
<rect x="1174.9" y="136" width="2" height="737" fill="#0d99ff"/>
<rect x="1348" y="288" width="6" height="96" rx="3" fill="#a9a9a9"/>
<rect x="295" y="862" width="163" height="6.5" rx="3.2" fill="#a9a9a9"/>
</svg>
<div class="h" style="left:63px;top:394.5px">Geo-technical Investigations</div>
<div class="p" style="left:63px;top:417px">Subsurface exploration to determine soil and rock conditions,<br>including boreholes, test pits, and in-situ testing for construction<br>projects.</div>
<div class="h" style="left:696px;top:369.2px;letter-spacing:-0.12px">Geophysical Surveys</div>
<div class="p" style="left:696.5px;top:391.4px">Non-invasive techniques like seismic refraction,<br>electrical resistivity, and ground-penetrating radar to<br>map subsurface conditions and identify anomalies.</div>
<div class="h" style="left:59.5px;top:845.7px;letter-spacing:0.25px">Laboratory Testing</div>
<div class="h" style="left:665px;top:845.3px;letter-spacing:-0.08px">Topographical Surveys</div>
</div></div><div id="panel"><div class="a" style="left:-1359px;top:-136px;width:1600px;height:873px">
<svg width="0" height="0" style="left:0;top:0"><defs><filter id="avblur"><feGaussianBlur stdDeviation="0.45"/></filter></defs></svg>
<svg style="left:1375.3px;top:149px" width="13" height="13" viewBox="0 0 13 13"><circle cx="5.4" cy="5.4" r="4.6" fill="none" stroke="#333" stroke-width="1.1"/><path d="M8.7 8.7L12.3 12.3" stroke="#333" stroke-width="1.2"/></svg>
<div class="a" style="left:1395.5px;top:148px;font-size:11.5px;line-height:14px;color:#999;white-space:nowrap">Search</div>
<svg style="left:1503px;top:146px" width="18" height="18" viewBox="0 0 18 18"><circle cx="9" cy="9" r="7.6" fill="none" stroke="#222" stroke-width="1.1"/><path d="M5.5 7H12.5M6.5 9.2H11.5M7.6 11.4H10.4" stroke="#222" stroke-width="1.1"/></svg>
<svg style="left:1537px;top:149px" width="14" height="14" viewBox="0 0 14 14"><path d="M3.5 0.5V13.5M10.5 0.5V13.5" stroke="#222" stroke-width="1.1"/><circle cx="3.5" cy="9.2" r="2" fill="#fff" stroke="#222" stroke-width="1.1"/><circle cx="10.5" cy="3.8" r="2" fill="#fff" stroke="#222" stroke-width="1.1"/></svg>
<svg style="left:1570px;top:149.5px" width="12" height="12" viewBox="0 0 12 12"><path d="M.8 .8L11.2 11.2M11.2 .8L.8 11.2" stroke="#222" stroke-width="1.2"/></svg>
<div class="a" style="left:1359px;top:175px;width:241px;height:1px;background:#e6e6e6"></div>
<svg style="left:1375.5px;top:186px" width="24" height="24" viewBox="0 0 24 24"><defs><clipPath id="av198"><circle cx="12" cy="12" r="12"/></clipPath></defs><g clip-path="url(#av198)" filter="url(#avblur)"><rect width="24" height="24" fill="#d4d4d4"/><path d="M14 0L24 0V6Q18 4 14 8Z" fill="#e2e2e2"/><path d="M2 6Q5 3.5 10 5.5Q7 7.5 2 6.5ZM12.5 6.5Q17 4.5 23 7Q19 8.5 12.5 7.2Z" fill="#8e8e8e"/><path d="M4 7V16M6 7V15" stroke="#9a9a9a" stroke-width="0.9"/><path d="M0 12Q3 10 5 12V14H0Z" fill="#a2a2a2"/><path d="M20 11Q23 10 24 12V14H20Z" fill="#a5a5a5"/><path d="M7 11Q12 8.5 16 10Q19 11 19.5 14Q20 17 18 18H16V15.5Q12 16.5 9.5 15.5V18.5H7.5Q6.5 15 7 11Z" fill="#a3a3a3"/><rect y="18.5" width="24" height="6" fill="#b3b3b3"/></g></svg>
<div class="a" style="left:1375.3px;top:219px;font-size:11.5px;line-height:14px;color:#8c8c8c;white-space:nowrap">#13</div>
<div class="a" style="left:1375.3px;top:243px;font-size:11.5px;line-height:14px;color:#3a3a3a;white-space:nowrap"><span style="-webkit-text-stroke:0.35px #3a3a3a">Pankaj Bisht</span> <span style="color:#aaa">1 month ago</span></div>
<div class="a" style="left:1375.3px;top:263px;font-size:11.5px;line-height:14px;color:#4a4a4a;letter-spacing:0.13px;white-space:nowrap">by click on logo the user should be</div>
<div class="a" style="left:1375.3px;top:279px;font-size:11.5px;line-height:14px;color:#4a4a4a;letter-spacing:0.13px;white-space:nowrap">directed to the homepage.</div>
<div class="a" style="left:1375.3px;top:295px;font-size:11.5px;line-height:14px;color:#4a4a4a;letter-spacing:0.13px;white-space:nowrap">and this is not the final layout we are ...</div>
<div class="a" style="left:1375.3px;top:330px;width:208px;height:1px;background:#e6e6e6"></div>
<svg style="left:1375.5px;top:351px" width="24" height="24" viewBox="0 0 24 24"><defs><clipPath id="av363"><circle cx="12" cy="12" r="12"/></clipPath></defs><g clip-path="url(#av363)" filter="url(#avblur)"><rect width="24" height="24" fill="#d4d4d4"/><path d="M14 0L24 0V6Q18 4 14 8Z" fill="#e2e2e2"/><path d="M2 6Q5 3.5 10 5.5Q7 7.5 2 6.5ZM12.5 6.5Q17 4.5 23 7Q19 8.5 12.5 7.2Z" fill="#8e8e8e"/><path d="M4 7V16M6 7V15" stroke="#9a9a9a" stroke-width="0.9"/><path d="M0 12Q3 10 5 12V14H0Z" fill="#a2a2a2"/><path d="M20 11Q23 10 24 12V14H20Z" fill="#a5a5a5"/><path d="M7 11Q12 8.5 16 10Q19 11 19.5 14Q20 17 18 18H16V15.5Q12 16.5 9.5 15.5V18.5H7.5Q6.5 15 7 11Z" fill="#a3a3a3"/><rect y="18.5" width="24" height="6" fill="#b3b3b3"/></g></svg>
<div class="a" style="left:1375.3px;top:384px;font-size:11.5px;line-height:14px;color:#8c8c8c;white-space:nowrap">#12</div>
<div class="a" style="left:1375.3px;top:408px;font-size:11.5px;line-height:14px;color:#3a3a3a;white-space:nowrap"><span style="-webkit-text-stroke:0.35px #3a3a3a">Pankaj Bisht</span> <span style="color:#aaa">1 month ago</span></div>
<div class="a" style="left:1375.3px;top:428px;font-size:11.5px;line-height:14px;color:#4a4a4a;letter-spacing:0.13px;white-space:nowrap">Disclaimer we have a bunch of</div>
<div class="a" style="left:1375.3px;top:444px;font-size:11.5px;line-height:14px;color:#4a4a4a;letter-spacing:0.13px;white-space:nowrap">hyperlink that lead to pdf files.</div>
<div class="a" style="left:1375.3px;top:479px;width:208px;height:1px;background:#e6e6e6"></div>
<svg style="left:1375.5px;top:500px" width="24" height="24" viewBox="0 0 24 24"><defs><clipPath id="av512"><circle cx="12" cy="12" r="12"/></clipPath></defs><g clip-path="url(#av512)" filter="url(#avblur)"><rect width="24" height="24" fill="#d4d4d4"/><path d="M14 0L24 0V6Q18 4 14 8Z" fill="#e2e2e2"/><path d="M2 6Q5 3.5 10 5.5Q7 7.5 2 6.5ZM12.5 6.5Q17 4.5 23 7Q19 8.5 12.5 7.2Z" fill="#8e8e8e"/><path d="M4 7V16M6 7V15" stroke="#9a9a9a" stroke-width="0.9"/><path d="M0 12Q3 10 5 12V14H0Z" fill="#a2a2a2"/><path d="M20 11Q23 10 24 12V14H20Z" fill="#a5a5a5"/><path d="M7 11Q12 8.5 16 10Q19 11 19.5 14Q20 17 18 18H16V15.5Q12 16.5 9.5 15.5V18.5H7.5Q6.5 15 7 11Z" fill="#a3a3a3"/><rect y="18.5" width="24" height="6" fill="#b3b3b3"/></g></svg>
<div class="a" style="left:1375.3px;top:533px;font-size:11.5px;line-height:14px;color:#8c8c8c;white-space:nowrap">#11</div>
<div class="a" style="left:1375.3px;top:557px;font-size:11.5px;line-height:14px;color:#3a3a3a;white-space:nowrap"><span style="-webkit-text-stroke:0.35px #3a3a3a">Pankaj Bisht</span> <span style="color:#aaa">1 month ago</span></div>
<div class="a" style="left:1375.3px;top:577px;font-size:11.5px;line-height:14px;color:#4a4a4a;letter-spacing:0.13px;white-space:nowrap">this button will be fixed while scrolling</div>
<div class="a" style="left:1375.3px;top:612px;width:208px;height:1px;background:#e6e6e6"></div>
<svg style="left:1375.5px;top:633px" width="24" height="24" viewBox="0 0 24 24"><defs><clipPath id="av645"><circle cx="12" cy="12" r="12"/></clipPath></defs><g clip-path="url(#av645)" filter="url(#avblur)"><rect width="24" height="24" fill="#d4d4d4"/><path d="M14 0L24 0V6Q18 4 14 8Z" fill="#e2e2e2"/><path d="M2 6Q5 3.5 10 5.5Q7 7.5 2 6.5ZM12.5 6.5Q17 4.5 23 7Q19 8.5 12.5 7.2Z" fill="#8e8e8e"/><path d="M4 7V16M6 7V15" stroke="#9a9a9a" stroke-width="0.9"/><path d="M0 12Q3 10 5 12V14H0Z" fill="#a2a2a2"/><path d="M20 11Q23 10 24 12V14H20Z" fill="#a5a5a5"/><path d="M7 11Q12 8.5 16 10Q19 11 19.5 14Q20 17 18 18H16V15.5Q12 16.5 9.5 15.5V18.5H7.5Q6.5 15 7 11Z" fill="#a3a3a3"/><rect y="18.5" width="24" height="6" fill="#b3b3b3"/></g></svg>
<div class="a" style="left:1375.3px;top:666px;font-size:11.5px;line-height:14px;color:#8c8c8c;white-space:nowrap">#10</div>
<div class="a" style="left:1375.3px;top:690px;font-size:11.5px;line-height:14px;color:#3a3a3a;white-space:nowrap"><span style="-webkit-text-stroke:0.35px #3a3a3a">Pankaj Bisht</span> <span style="color:#aaa">1 month ago</span></div>
<div class="a" style="left:1375.3px;top:710px;font-size:11.5px;line-height:14px;color:#4a4a4a;letter-spacing:0.13px;white-space:nowrap">these will lead to landing page of</div>
<div class="a" style="left:1375.3px;top:726px;font-size:11.5px;line-height:14px;color:#4a4a4a;letter-spacing:0.13px;white-space:nowrap">services</div>
<div class="a" style="left:1375.3px;top:761px;width:208px;height:1px;background:#e6e6e6"></div>
<svg style="left:1375.5px;top:782px" width="24" height="24" viewBox="0 0 24 24"><defs><clipPath id="av794"><circle cx="12" cy="12" r="12"/></clipPath></defs><g clip-path="url(#av794)" filter="url(#avblur)"><rect width="24" height="24" fill="#d4d4d4"/><path d="M14 0L24 0V6Q18 4 14 8Z" fill="#e2e2e2"/><path d="M2 6Q5 3.5 10 5.5Q7 7.5 2 6.5ZM12.5 6.5Q17 4.5 23 7Q19 8.5 12.5 7.2Z" fill="#8e8e8e"/><path d="M4 7V16M6 7V15" stroke="#9a9a9a" stroke-width="0.9"/><path d="M0 12Q3 10 5 12V14H0Z" fill="#a2a2a2"/><path d="M20 11Q23 10 24 12V14H20Z" fill="#a5a5a5"/><path d="M7 11Q12 8.5 16 10Q19 11 19.5 14Q20 17 18 18H16V15.5Q12 16.5 9.5 15.5V18.5H7.5Q6.5 15 7 11Z" fill="#a3a3a3"/><rect y="18.5" width="24" height="6" fill="#b3b3b3"/></g></svg>
<div class="a" style="left:1375.3px;top:815px;font-size:11.5px;line-height:14px;color:#8c8c8c;white-space:nowrap">#9</div>
<div class="a" style="left:1375.3px;top:839px;font-size:11.5px;line-height:14px;color:#3a3a3a;white-space:nowrap"><span style="-webkit-text-stroke:0.35px #3a3a3a">Pankaj Bisht</span> <span style="color:#aaa">1 month ago</span></div>
<div class="a" style="left:1375.3px;top:859px;font-size:11.5px;line-height:14px;color:#4a4a4a;letter-spacing:0.13px;white-space:nowrap">header will be fixed and we want a</div>
<div class="a" style="left:1551px;top:681px;width:32px;height:136px;border-radius:16px;background:#fff;box-shadow:0 1px 4px rgba(0,0,0,.18),0 0 1px rgba(0,0,0,.15)"></div>
<svg style="left:1561px;top:691px" width="12" height="12" viewBox="0 0 12 12"><path d="M6 .5V11.5M.5 6H11.5" stroke="#222" stroke-width="1.2"/></svg>
<div class="a" style="left:1566.5px;top:715px;width:1px;height:68px;background:#ddd"></div>
<div class="a" style="left:1560.5px;top:730.5px;width:13px;height:13px;border-radius:50%;background:#fff;border:1px solid #ddd"></div>
<div class="a" style="left:1561px;top:800px;width:12px;height:1.2px;background:#222"></div>
<div class="a" style="left:1551px;top:825px;width:32px;height:32px;border-radius:50%;background:#222;color:#fff;font-size:18px;line-height:32px;text-align:center">?</div>
</div></div><div class="a" style="left:195px;top:398.7px;width:32px;height:32px;border-radius:50%;background:#fff;box-shadow:0 1px 6px rgba(0,0,0,.08),0 0 2px rgba(0,0,0,.04)"></div>
<div class="a" style="left:199px;top:402.7px;width:24px;height:24px;border-radius:50%;background:#5f7896"></div>
<svg style="left:205px;top:409px" width="12" height="12" viewBox="0 0 12 12"><ellipse cx="6" cy="6" rx="3.3" ry="4" fill="none" stroke="#fff" stroke-width="1"/></svg>
<div class="a" style="left:400.5px;top:735px;width:799px;height:122px;border-radius:13px;background:#f2e4fc;box-shadow:0 1px 3px rgba(0,0,0,.12)"></div>
<div class="a" style="left:400.5px;top:776px;width:799px;height:81px;border-radius:13px;background:#fff;border:1px solid rgba(0,0,0,.13);box-shadow:0 1px 3px rgba(0,0,0,.08)"></div>
<div class="a" style="left:411px;top:744px;width:90.5px;height:23px;border-radius:5px;background:#e7d3fb"></div>
<svg style="left:420px;top:750px" width="14" height="11" viewBox="0 0 14 11"><path d="M1 5.5Q7 -1.5 13 5.5Q7 12.5 1 5.5Z" fill="none" stroke="#8f4fe0" stroke-width="1.3"/><circle cx="7" cy="5.5" r="1.9" fill="none" stroke="#8f4fe0" stroke-width="1.3"/></svg>
<div class="a" style="left:439.5px;top:748px;font-size:12.5px;line-height:15px;font-weight:bold;color:#8f4fe0;white-space:nowrap">View-only</div>
<div class="a" style="left:508.5px;top:747.5px;font-size:12.6px;line-height:15px;color:#8f4fe0;white-space:nowrap">There’s still fun to be had—use</div>
<div class="a" style="left:686px;top:746px;width:18px;height:21px;border-radius:3px;background:#9747ff;color:#fff;font-size:12px;font-weight:bold;line-height:21px;text-align:center">C</div>
<div class="a" style="left:710px;top:747.5px;font-size:12.6px;line-height:15px;color:#8f4fe0;white-space:nowrap">to comment,</div>
<div class="a" style="left:785px;top:746px;width:18px;height:21px;border-radius:3px;background:#f8f0fe;border:1px solid #9747ff;border-bottom-width:2px;color:#8f4fe0;font-size:12px;line-height:18px;text-align:center">/</div>
<div class="a" style="left:809.5px;top:747.5px;font-size:12.6px;line-height:15px;color:#8f4fe0;white-space:nowrap">to chat, or</div>
<div class="a" style="left:871px;top:746px;width:18px;height:21px;border-radius:3px;background:#f8f0fe;border:1px solid #9747ff;border-bottom-width:2px;color:#8f4fe0;font-size:11.5px;line-height:18px;text-align:center;font-weight:bold">E</div>
<div class="a" style="left:895px;top:747.5px;font-size:12.6px;line-height:15px;color:#8f4fe0;white-space:nowrap">to emote.</div>
<div class="a" style="left:1082.5px;top:748.5px;font-size:11.5px;line-height:15px;color:#c6a6ee;white-space:nowrap">Request sent</div>
<svg style="left:1172px;top:749.5px" width="12" height="12" viewBox="0 0 12 12"><path d="M.8 .8L11.2 11.2M11.2 .8L.8 11.2" stroke="#8f4fe0" stroke-width="1.3"/></svg>
<div class="a" style="left:444px;top:777px;width:1px;height:79px;background:#e2e2e2"></div>
<div class="a" style="left:757px;top:777px;width:1px;height:79px;background:#e2e2e2"></div>
<div class="a" style="left:1006px;top:777px;width:1px;height:79px;background:#e2e2e2"></div>
<svg style="left:416px;top:790px" width="15" height="16" viewBox="0 0 15 16"><path d="M1.5 1.5L13.5 6.5L8 8.5L5.5 14.5Z" fill="none" stroke="#222" stroke-width="1.1" stroke-linejoin="round"/></svg>
<svg style="left:413px;top:825px" width="20" height="21" viewBox="0 0 20 21"><path d="M5.5 12V4.5Q5.5 3 7 3Q8.5 3 8.5 4.5V10M8.5 9V2.5Q8.5 1 10 1Q11.5 1 11.5 2.5V9M11.5 9V3.5Q11.5 2 13 2Q14.5 2 14.5 3.5V10M14.5 10V6Q14.5 4.7 15.8 4.7Q17 4.7 17 6V13Q17 19.5 11 19.5Q7.5 19.5 5 16L2 12.5Q1.3 11.5 2.2 10.8Q3.2 10 4.2 11L5.5 12.3" fill="none" stroke="#222" stroke-width="1.1" stroke-linejoin="round"/></svg>
<svg style="left:445px;top:778px" width="312" height="78" viewBox="0 0 312 78"><defs><linearGradient id="pen" x1="0" x2="1"><stop offset="0" stop-color="#fafafa"/><stop offset=".5" stop-color="#eeeeee"/><stop offset="1" stop-color="#fafafa"/></linearGradient></defs><path d="M41.3 32.5L48.5 15L55.5 32.5L68 78H27.6Z" fill="url(#pen)"/><path d="M41.5 32.5L48.5 15L55.2 32.5Z" fill="#c9c9c9"/><path d="M89.6 42L120 37L140 78H99Z" fill="#fbf1de"/><path d="M97.5 28L140 22L150 78H106Z" fill="#fcf3e0"/><path d="M147 15H193V78H108L106 50Q112 30 127 23Z" fill="#fdf4e2"/><path d="M141 25L116 43Q125 36 134 36Q138 30 141 25Z" fill="#fbf6ec"/><circle cx="228" cy="31" r="17" fill="none" stroke="#f7f7f7" stroke-width="1.5"/><rect x="253" y="14" width="31" height="31" rx="4" fill="none" stroke="#f7f7f7" stroke-width="1.5"/></svg>
<svg style="left:757px;top:778px" width="249" height="78" viewBox="0 0 249 78"><g fill="none" stroke="#c8c8c8" stroke-width="2.2"><rect x="22" y="20" width="38" height="38" rx="7" stroke="#f1f1f1" stroke-width="1"/><path d="M31 29H51M41 29V50"/><rect x="18" y="38" width="3" height="3" fill="#c8c8c8" stroke="none"/><rect x="61" y="38" width="3" height="3" fill="#c8c8c8" stroke="none"/><rect x="77" y="20" width="38" height="38" rx="7" stroke="#f1f1f1" stroke-width="1"/><path d="M85 32V45Q85 51 91 51H105Q110 51 110 45V32Q110 26 104 26H101"/><rect x="85" y="25" width="12" height="6" rx="1"/><rect x="133" y="20" width="38" height="38" rx="7" stroke="#f1f1f1" stroke-width="1"/><rect x="139" y="27" width="27" height="25" rx="3"/><path d="M139 35H166M139 43H166M147 27V52"/><rect x="189" y="20" width="38" height="38" rx="7" stroke="#f1f1f1" stroke-width="1"/><circle cx="208" cy="30" r="4"/><path d="M205 34V39H198V45H218V39H211V34M198 50H218"/></g></svg>
<svg style="left:1007px;top:778px" width="192" height="78" viewBox="0 0 192 78"><defs><clipPath id="tb3"><rect width="192" height="78"/></clipPath></defs><g clip-path="url(#tb3)"><circle cx="42" cy="63" r="24.5" fill="#fcf0d8" stroke="#e4e0da" stroke-width="1.5"/><path d="M60 48A24.5 24.5 0 0 1 58 82" fill="none" stroke="#d4d4d4" stroke-width="3"/><path d="M33 58L38 60.5L33 63M50 56L45 59L50 61.5" fill="none" stroke="#cfc9bd" stroke-width="1.3"/><path d="M20 71Q42 62 62 66Q60 82 42 82Q24 82 20 71Z" fill="#c8c8c8"/><path d="M24 71Q42 65 58 67Q57 71 42 73Q30 74 24 71Z" fill="#fff"/><g transform="rotate(12 95 55)"><rect x="74" y="42" width="46" height="30" rx="4" fill="#f5f3f7"/><rect x="78" y="45" width="26" height="8" rx="2" fill="#c9c9c9"/><rect x="80" y="57" width="8" height="8" fill="#dff0d0"/><rect x="91" y="57" width="8" height="8" fill="#ecd9f5"/><rect x="102" y="57" width="8" height="8" fill="#d4ecf8"/><rect x="113" y="57" width="5" height="8" fill="#e8e8e8"/><rect x="106" y="46" width="10" height="8" fill="#f2dff0"/></g><rect x="134" y="21" width="39" height="39" rx="8" fill="none" stroke="#f8f8f8"/><path d="M153 28V50M142 39H164" stroke="#ececec" stroke-width="1.6"/></g></svg></div></body></html>
